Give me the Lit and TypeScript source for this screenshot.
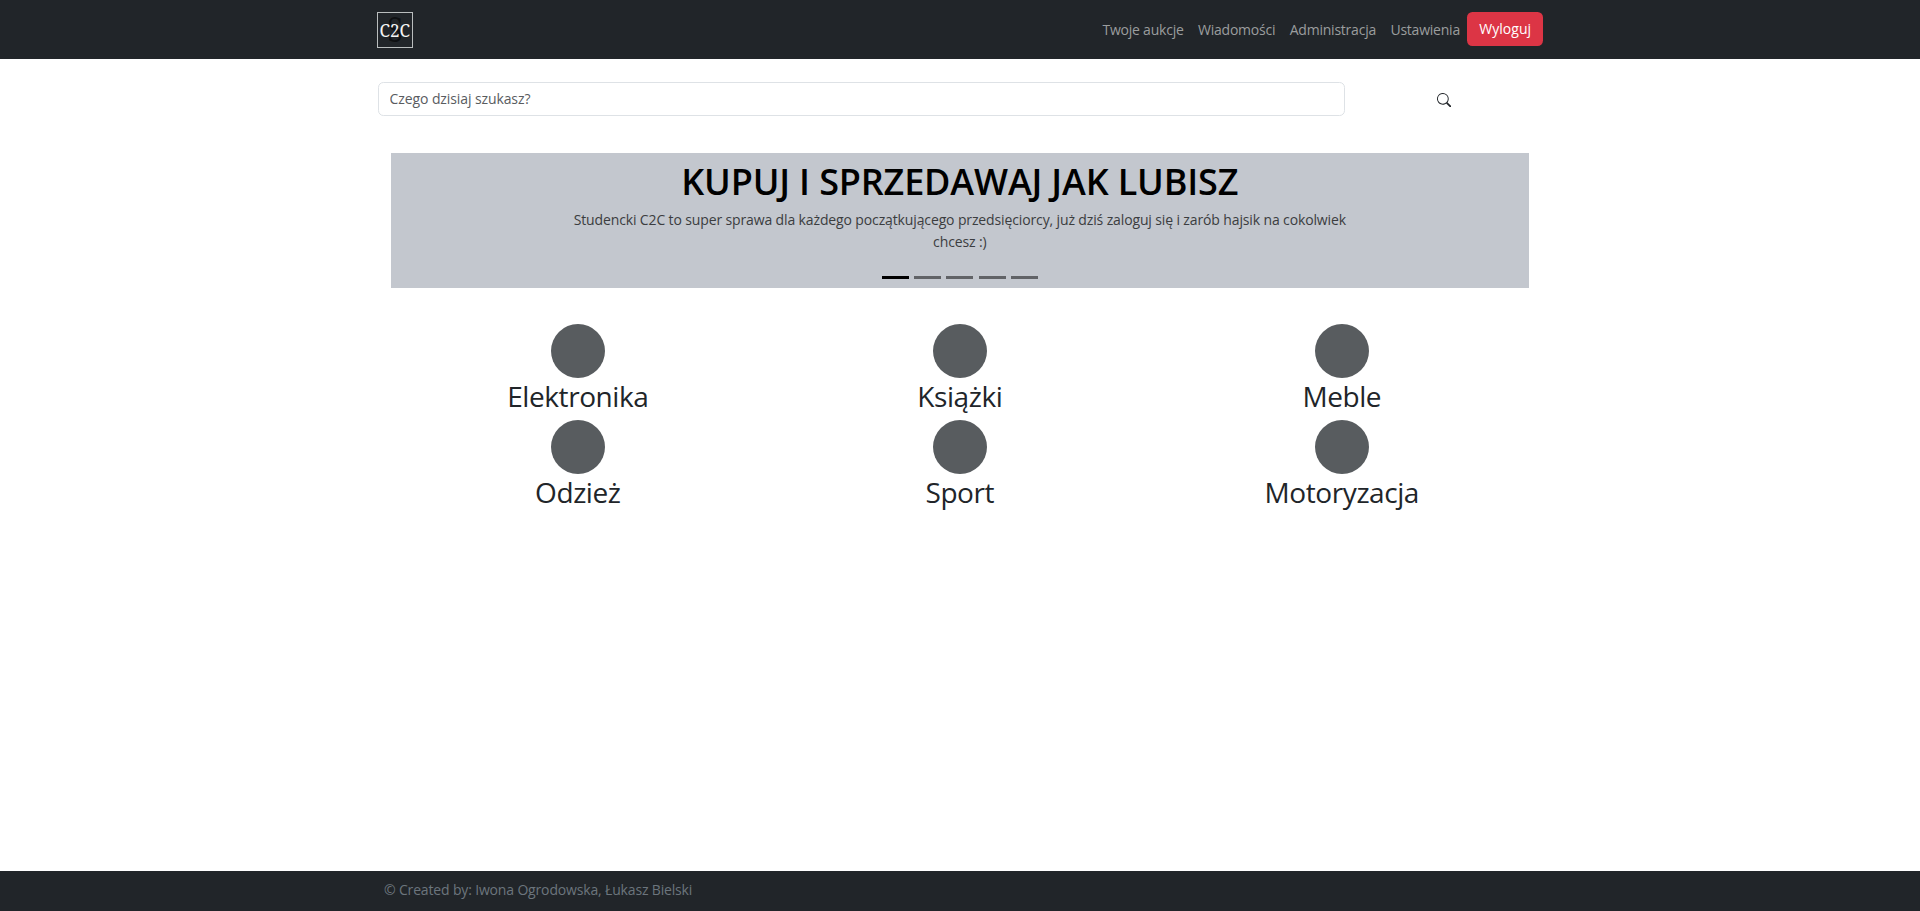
import { LitElement, html, css } from "lit";
import { customElement } from "lit/decorators.js";

@customElement("app-root")
export class AppRoot extends LitElement {
  static styles = css`
    :host { display: flex; flex-direction: column; height: 911px; background: #fff; color: #212529;
      font: 400 14px/21.6px "Open Sans", "Noto Sans", sans-serif; letter-spacing: -0.2px; }
    * { box-sizing: border-box; }
    h1, p { margin: 0; }
    header { height: 59px; flex: none; background: #212529; }
    .bar { width: 1166.4px; margin: 0 auto; padding-top: 12px; display: flex; align-items: flex-start; justify-content: space-between; }
    .logo { width: 36px; height: 36px; display: block; letter-spacing: 0; overflow: visible; }
    nav { display: flex; }
    nav a { padding: 7px 7.2px; color: #9b9d9e; white-space: nowrap; letter-spacing: -0.22px; }
    nav button { height: 34px; width: 76px; padding: 0; border: 0; border-radius: 5.4px; background: #dc3545; color: #fff; font: inherit; font-weight: 500; letter-spacing: 0.05px; }
    main { flex: 1; width: 1166.4px; margin: 0 auto; }
    .search { display: flex; align-items: center; padding: 23px 0 0 1px; }
    input { width: 967px; height: 34px; padding: 0 10.8px 2px; border: 1px solid #dee2e6; border-radius: 5.4px; font: inherit; letter-spacing: -0.1px; }
    input::placeholder { color: #595c5f; opacity: 1; }
    .find { margin: 2px 0 0 92px; width: 14.4px; height: 14.4px; }
    .slide { width: 1138px; height: 135px; margin: 37px 0 0 14px; padding: 7px 170px 0; background: #c3c7ce; text-align: center; display: flex; flex-direction: column; align-items: center; }
    h1 { font-size: 36px; line-height: 43px; font-weight: 600; color: #000; white-space: nowrap; letter-spacing: -0.15px; }
    .slide p { color: #3b3d40; margin-top: 6.4px; letter-spacing: -0.13px; }
    .dots { display: flex; gap: 5.4px; margin-top: 23.6px; }
    .dots i { width: 27px; height: 3px; background: #616367; }
    .dots i.on { background: #000; }
    .cats { display: grid; grid-template-columns: repeat(3, 382px); margin: 36px 0 0 10px; }
    .cat { height: 96px; display: flex; flex-direction: column; align-items: center; font-size: 28px; line-height: 36px; letter-spacing: -0.42px; white-space: nowrap; }
    .cat i { width: 54px; height: 54px; border-radius: 50%; background: #585c5f; }
    footer { height: 40px; flex: none; background: #212529; color: #6c757d; }
    .foot { width: 1166.4px; margin: 0 auto; padding: 8px 7.2px; letter-spacing: -0.16px; }
  `;
  private links = ["Twoje aukcje", "Wiadomości", "Administracja", "Ustawienia"];
  private cats = ["Elektronika", "Książki", "Meble", "Odzież", "Sport", "Motoryzacja"];
  render() {
    return html`
      <header><div class="bar">
        <svg class="logo" viewBox="0 0 36 36">
          <text x="10" y="29.5" font-family="DejaVu Serif" font-size="33" fill="#0e1012" textLength="16" lengthAdjust="spacingAndGlyphs">S</text>
          <rect x=".5" y=".5" width="35" height="35" fill="none" stroke="#b9bdbd"/>
          <text x="2.5" y="25" font-family="Noto Serif, DejaVu Serif" font-size="18.5" fill="#f4f4f4" textLength="30.5" lengthAdjust="spacingAndGlyphs">C2C</text>
        </svg>
        <nav>${this.links.map((l) => html`<a>${l}</a>`)}<button>Wyloguj</button></nav>
      </div></header>
      <main>
        <div class="search"><input placeholder="Czego dzisiaj szukasz?" />
          <svg class="find" viewBox="0 0 16 16" fill="#212529"><path d="M11.742 10.344a6.5 6.5 0 1 0-1.397 1.398h-.001c.03.04.062.078.098.115l3.85 3.85a1 1 0 0 0 1.415-1.414l-3.85-3.85a1.007 1.007 0 0 0-.115-.1zM12 6.5a5.5 5.5 0 1 1-11 0 5.5 5.5 0 0 1 11 0z"/></svg>
        </div>
        <section class="slide">
          <h1>KUPUJ I SPRZEDAWAJ JAK LUBISZ</h1>
          <p>Studencki C2C to super sprawa dla każdego początkującego przedsięciorcy, już dziś zaloguj się i zarób hajsik na cokolwiek chcesz :)</p>
          <div class="dots"><i class="on"></i><i></i><i></i><i></i><i></i></div>
        </section>
        <section class="cats">${this.cats.map((c) => html`<div class="cat"><i></i><span>${c}</span></div>`)}</section>
      </main>
      <footer><div class="foot">© Created by: Iwona Ogrodowska, Łukasz Bielski</div></footer>
    `;
  }
}
